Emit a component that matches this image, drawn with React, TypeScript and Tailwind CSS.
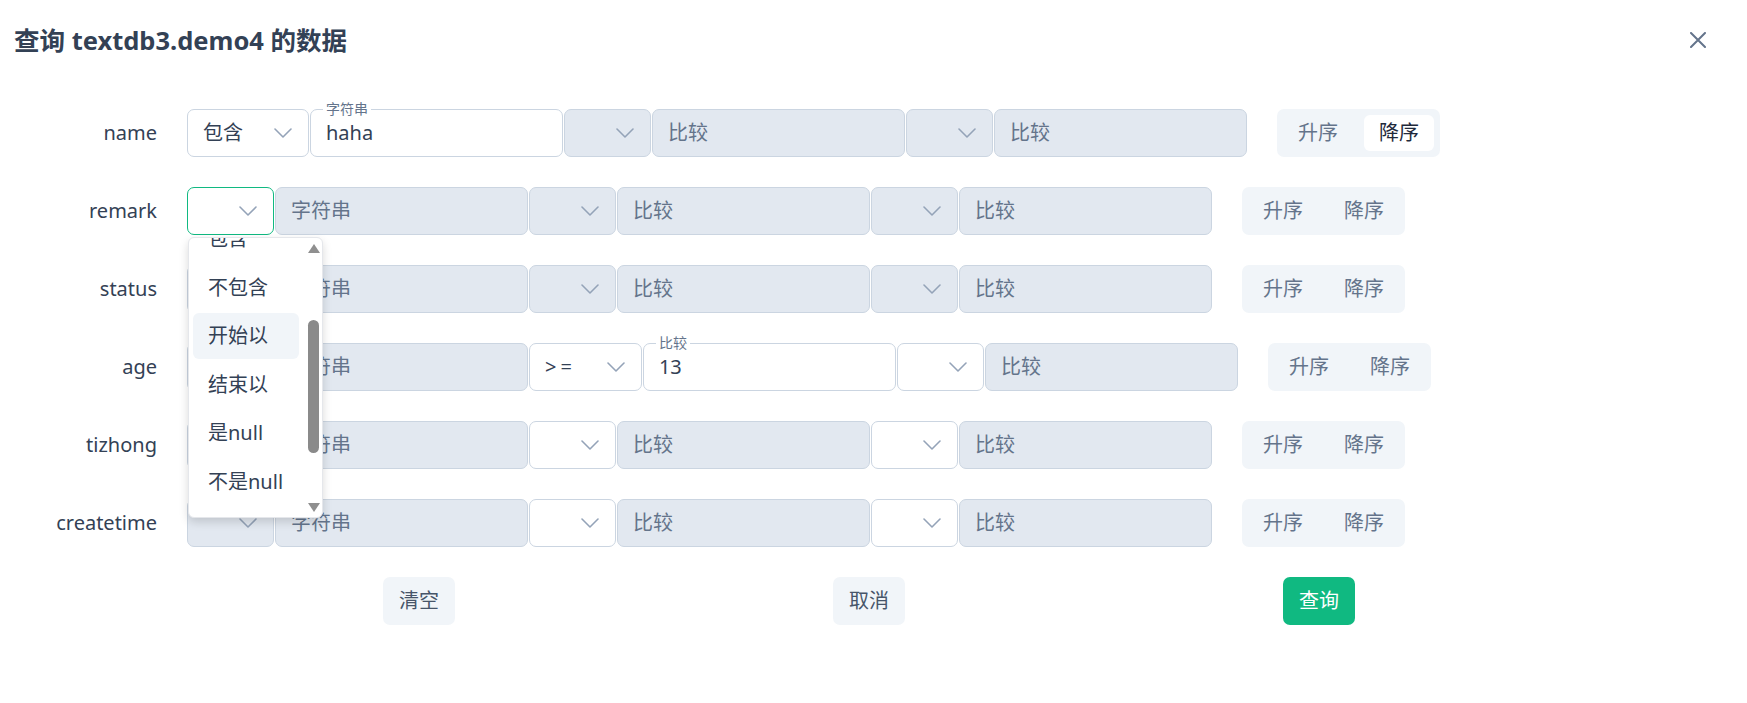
type Field = {
  value?: string;
  placeholder?: string;
  legend?: string;
  disabled?: boolean;
};

type Sel = {
  value?: string;
  disabled?: boolean;
  focused?: boolean;
  open?: boolean;
};

type Row = {
  label: string;
  sel1: Sel;
  str: Field;
  sel2: Sel;
  cmp1: Field;
  sel3: Sel;
  cmp2: Field;
  sort?: "asc" | "desc";
};

const rows: Row[] = [
  {
    label: "name",
    sel1: { value: "包含" },
    str: { value: "haha", legend: "字符串" },
    sel2: { disabled: true },
    cmp1: { placeholder: "比较", disabled: true },
    sel3: { disabled: true },
    cmp2: { placeholder: "比较", disabled: true },
    sort: "desc",
  },
  {
    label: "remark",
    sel1: { focused: true, open: true },
    str: { placeholder: "字符串", disabled: true },
    sel2: { disabled: true },
    cmp1: { placeholder: "比较", disabled: true },
    sel3: { disabled: true },
    cmp2: { placeholder: "比较", disabled: true },
  },
  {
    label: "status",
    sel1: { disabled: true },
    str: { placeholder: "字符串", disabled: true },
    sel2: { disabled: true },
    cmp1: { placeholder: "比较", disabled: true },
    sel3: { disabled: true },
    cmp2: { placeholder: "比较", disabled: true },
  },
  {
    label: "age",
    sel1: { disabled: true },
    str: { placeholder: "字符串", disabled: true },
    sel2: { value: ">=" },
    cmp1: { value: "13", legend: "比较" },
    sel3: {},
    cmp2: { placeholder: "比较", disabled: true },
  },
  {
    label: "tizhong",
    sel1: { disabled: true },
    str: { placeholder: "字符串", disabled: true },
    sel2: {},
    cmp1: { placeholder: "比较", disabled: true },
    sel3: {},
    cmp2: { placeholder: "比较", disabled: true },
  },
  {
    label: "createtime",
    sel1: { disabled: true },
    str: { placeholder: "字符串", disabled: true },
    sel2: {},
    cmp1: { placeholder: "比较", disabled: true },
    sel3: {},
    cmp2: { placeholder: "比较", disabled: true },
  },
];

const options = ["包含", "不包含", "开始以", "结束以", "是null", "不是null"];

function Chevron() {
  return (
    <svg width="18" height="10" viewBox="0 0 18 10" fill="none" className="shrink-0">
      <path d="M1 1L9 9L17 1" stroke="#94a3b8" strokeWidth="1.6" strokeLinecap="round" strokeLinejoin="round" />
    </svg>
  );
}

function Dropdown() {
  return (
    <div className="absolute top-[calc(100%+2px)] left-[1px] z-10 flex w-[135px] h-[281px] bg-white rounded-[6px] border border-[#e5e7eb] shadow-[0_4px_10px_rgba(0,0,0,0.15)] overflow-hidden">
      <div className="w-[116px] pl-[4px] overflow-hidden">
        <div className="flex flex-col gap-[2.6px] mt-[-22px]">
          {options.map((o) => (
            <div
              key={o}
              className={
                "h-[46px] w-[106px] shrink-0 flex items-center px-[15px] rounded-[6px] text-[#334155] " +
                (o === "开始以" ? "bg-[#f1f5f9]" : "")
              }
            >
              {o}
            </div>
          ))}
        </div>
      </div>
      <div className="w-[17px] flex flex-col items-center pt-[6px]">
        <svg width="12" height="9" viewBox="0 0 12 9">
          <path d="M6 0L12 9H0Z" fill="#8f8f8f" />
        </svg>
        <div className="mt-[67px] w-[11px] h-[133px] rounded-full bg-[#8a8a8a]" />
        <svg width="12" height="9" viewBox="0 0 12 9" className="mt-[50px]">
          <path d="M0 0H12L6 9Z" fill="#8f8f8f" />
        </svg>
      </div>
    </div>
  );
}

function Select({ sel }: { sel: Sel }) {
  const cls = sel.disabled
    ? "bg-[#e2e8f0] border-[#cbd5e1]"
    : sel.focused
      ? "bg-white border-[#10b981]"
      : "bg-white border-[#cbd5e1]";
  return (
    <div className="relative">
      <div
        className={
          "h-[48px] min-w-[87px] flex items-center gap-[31px] pl-[15px] pr-[16px] rounded-[7px] border text-[#334155] " +
          cls
        }
      >
        {sel.value && <span className={sel.value === ">=" ? "tracking-[4px]" : ""}>{sel.value}</span>}
        <span className="ml-auto">
          <Chevron />
        </span>
      </div>
      {sel.open && <Dropdown />}
    </div>
  );
}

function Input({ f }: { f: Field }) {
  return (
    <div
      className={
        "relative w-[253px] h-[48px] flex items-center px-[15px] rounded-[7px] border border-[#cbd5e1] " +
        (f.disabled ? "bg-[#e2e8f0]" : "bg-white")
      }
    >
      {f.legend && (
        <span className="absolute left-[12px] top-[-10px] px-[3px] bg-white text-[14px] leading-[18px] text-[#64748b]">
          {f.legend}
        </span>
      )}
      {f.value ? (
        <span className="text-[#334155]">{f.value}</span>
      ) : (
        <span className="text-[#64748b]">{f.placeholder}</span>
      )}
    </div>
  );
}

function Sort({ active }: { active?: "asc" | "desc" }) {
  const btn = (on: boolean) =>
    "w-[70px] h-[36px] flex items-center justify-center rounded-[6px] " +
    (on ? "bg-white text-[#1e293b]" : "text-[#64748b]");
  return (
    <div className="ml-[30px] flex gap-[11px] p-[6px] rounded-[7px] bg-[#f1f5f9]">
      <div className={btn(active === "asc")}>升序</div>
      <div className={btn(active === "desc")}>降序</div>
    </div>
  );
}

export default function App() {
  return (
    <div className="w-[1747px] h-[703px] bg-white font-['Noto_Sans','Noto_Sans_CJK_SC',sans-serif] text-[20px]">
      <div className="h-[80px] flex items-center justify-between pl-[14px] pr-[41px]">
        <h1 className="text-[25.5px] font-bold text-[#334155]">查询 textdb3.demo4 的数据</h1>
        <svg width="16" height="16" viewBox="0 0 16 16" fill="none">
          <path d="M1 1L15 15M15 1L1 15" stroke="#64748b" strokeWidth="2" strokeLinecap="round" />
        </svg>
      </div>

      <div className="mt-[29px] flex flex-col gap-[30px]">
        {rows.map((r) => (
          <div key={r.label} className="h-[48px] flex items-center">
            <div className="w-[157px] text-right text-[#334155]">{r.label}</div>
            <div className="ml-[30px] flex gap-[1px]">
              <Select sel={r.sel1} />
              <Input f={r.str} />
              <Select sel={r.sel2} />
              <Input f={r.cmp1} />
              <Select sel={r.sel3} />
              <Input f={r.cmp2} />
            </div>
            <Sort active={r.sort} />
          </div>
        ))}

        <div className="ml-[5px] w-[1728px] flex justify-evenly">
          <button className="w-[72px] h-[48px] rounded-[7px] bg-[#f1f5f9] text-[#475569]">清空</button>
          <button className="w-[72px] h-[48px] rounded-[7px] bg-[#f1f5f9] text-[#475569]">取消</button>
          <button className="w-[72px] h-[48px] rounded-[7px] bg-[#10b981] text-white">查询</button>
        </div>
      </div>
    </div>
  );
}
